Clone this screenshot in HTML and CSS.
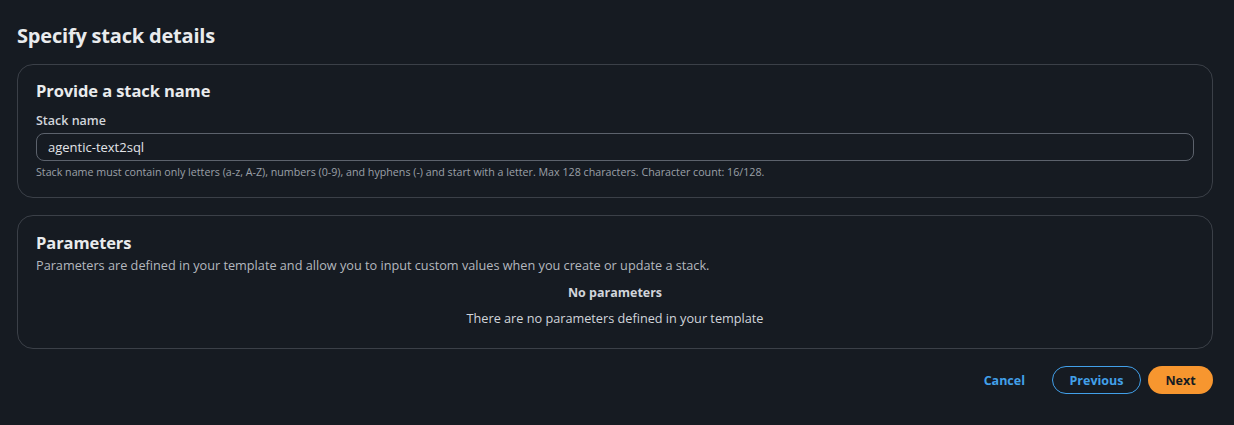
FILE: index.html
```html
<!DOCTYPE html>
<html>
<head>
<meta charset="utf-8">
<link rel="stylesheet" href="styles.css">
</head>
<body>
<main class="page">
  <h1 class="page-title">Specify stack details</h1>

  <section class="container">
    <h2 class="container-title">Provide a stack name</h2>
    <div class="field">
      <label class="field-label" for="stack-name">Stack name</label>
      <div class="input-wrap"><input id="stack-name" class="input" type="text" value="agentic-text2sql"></div>
      <p class="constraint">Stack name must contain only letters (a-z, A-Z), numbers (0-9), and hyphens (-) and start with a letter. Max 128 characters. Character count: 16/128.</p>
    </div>
  </section>

  <section class="container params">
    <h2 class="container-title">Parameters</h2>
    <p class="description">Parameters are defined in your template and allow you to input custom values when you create or update a stack.</p>
    <div class="empty">
      <p class="empty-title">No parameters</p>
      <p class="empty-text">There are no parameters defined in your template</p>
    </div>
  </section>

  <div class="actions">
    <button class="btn btn-link">Cancel</button>
    <button class="btn btn-normal">Previous</button>
    <button class="btn btn-primary">Next</button>
  </div>
</main>
</body>
</html>
```
FILE: styles.css
```css
* { box-sizing: border-box; }
html, body { margin: 0; padding: 0; }
body {
  background: #161b22;
  color: #d1d5db;
  font-family: "Open Sans", "Noto Sans", sans-serif;
  width: 1234px;
  height: 425px;
  overflow: hidden;
}
.page {
  padding: 22px 21px 0 17px;
}
.page-title {
  margin: 0 0 14px;
  font-size: 20px;
  line-height: 28px;
  font-weight: 700;
  color: #e9ebed;
  letter-spacing: -0.2px;
}
.container {
  border: 1px solid #3b4048;
  border-radius: 16px;
  padding: 14px 18px 17px 18px;
  margin-bottom: 17px;
}
.container-title {
  margin: 0;
  font-size: 16.5px;
  line-height: 24px;
  font-weight: 700;
  color: #e9ebed;
  letter-spacing: -0.1px;
}
.field { margin-top: 9px; }
.field-label {
  display: block;
  font-size: 12.5px;
  line-height: 18px;
  font-weight: 600;
  color: #d1d5db;
}
.input-wrap { margin-top: 3px; }
.input {
  display: block;
  width: 100%;
  height: 28px;
  border: 1px solid #5c626c;
  border-radius: 8px;
  background: transparent;
  color: #e2e4e8;
  font-family: inherit;
  font-size: 13px;
  padding: 0 11px;
  outline: none;
}
.constraint {
  margin: 3px 0 0;
  font-size: 10.7px;
  line-height: 16px;
  color: #9ba0a8;
}
.params { padding-top: 15px; padding-bottom: 21px; }
.description {
  margin: 1px 0 0;
  font-size: 12.7px;
  line-height: 18px;
  color: #b4b8bf;
}
.empty {
  text-align: center;
  margin-top: 10px;
}
.empty-title {
  margin: 0;
  font-size: 12.5px;
  line-height: 18px;
  font-weight: 700;
  color: #d1d5db;
}
.empty-text {
  margin: 7px 0 0;
  font-size: 12.7px;
  line-height: 18px;
  color: #d1d5db;
}
.actions {
  display: flex;
  justify-content: flex-end;
  align-items: center;
  gap: 7px;
  margin-top: 2px;
}
.btn {
  font-family: inherit;
  font-size: 12.5px;
  font-weight: 700;
  height: 28px;
  border-radius: 14px;
  cursor: pointer;
}
.btn-link {
  background: none;
  border: none;
  color: #42a0ea;
  padding: 0 16px;
  margin-right: 4px;
}
.btn-normal {
  background: transparent;
  border: 1.5px solid #42a0ea;
  color: #42a0ea;
  width: 89px;
}
.btn-primary {
  background: #f7962f;
  border: none;
  color: #161b22;
  width: 65px;
}
```
